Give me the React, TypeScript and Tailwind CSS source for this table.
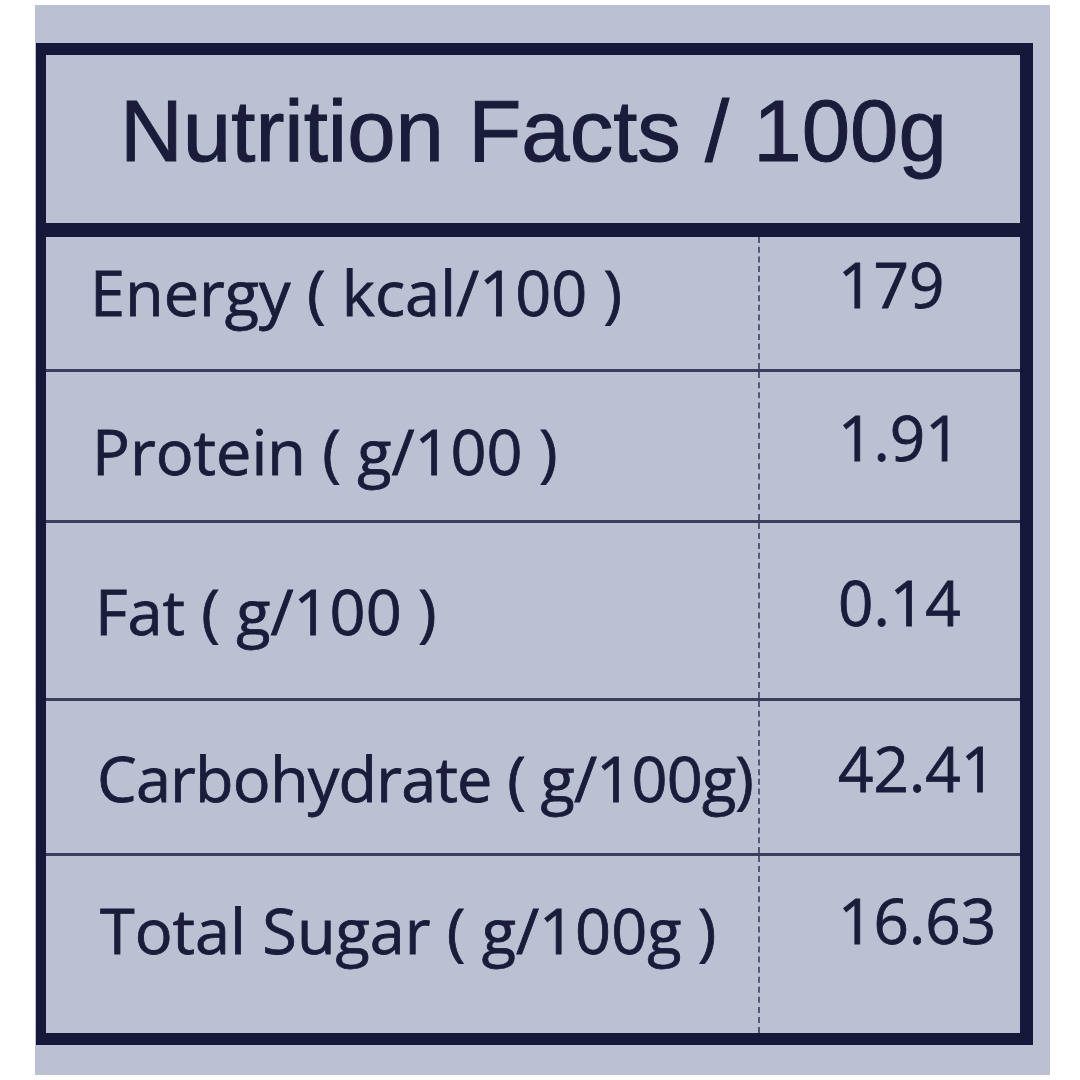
import React from "react";

type Row = {
  label: string;
  value: string;
  height: string;
  labelPad: string;
  valuePad: string;
  last?: boolean;
};

const rows: Row[] = [
  { label: "Energy ( kcal/100 )", value: "179", height: "h-[135px]", labelPad: "pl-[44px] pb-[24px]", valuePad: "pb-[38px]" },
  { label: "Protein ( g/100 )", value: "1.91", height: "h-[151px]", labelPad: "pl-[46px] pt-[8px]", valuePad: "pb-[18px]" },
  { label: "Fat ( g/100 )", value: "0.14", height: "h-[178px]", labelPad: "pl-[49px]", valuePad: "pb-[18px]" },
  { label: "Carbohydrate ( g/100g)", value: "42.41", height: "h-[155px]", labelPad: "pl-[51px] tracking-[-0.8px]", valuePad: "pb-[18px]" },
  { label: "Total Sugar ( g/100g )", value: "16.63", height: "h-[177px]", labelPad: "pl-[54px] pb-[30px]", valuePad: "pb-[50px]", last: true },
];

const App: React.FC = () => {
  return (
    <div className="min-h-[1080px] bg-white">
      <div className="ml-[35px] pt-[38px] w-[1015px] h-[1070px] mt-[5px] bg-[#bcc0d3]">
        <div className="ml-[1px] w-[997px] border-[#16183a] border-l-[10px] border-r-[13px] border-t-[12px] border-b-[12px] text-[#1a1c3a]">
          {/* Header */}
          <div className="h-[182px] border-b-[14px] border-[#16183a] flex items-center pl-[74px] pb-[18px]">
            <span className="font-['Liberation_Sans',Arial,sans-serif] text-[87px] leading-none [-webkit-text-stroke:1px_#1a1c3a]">
              Nutrition Facts / 100g
            </span>
          </div>

          {/* Rows */}
          {rows.map((row) => (
            <div
              key={row.label}
              className={`flex ${row.height} ${row.last ? "" : "border-b-[3px] border-[#3a3d5c]"}`}
            >
              <div
                className={`w-[714px] shrink-0 border-r-2 border-dashed border-[#555874] flex items-center ${row.labelPad}`}
              >
                <span className="font-['Open_Sans',sans-serif] text-[63px] leading-none whitespace-nowrap [-webkit-text-stroke:0.8px_#1a1c3a]">
                  {row.label}
                </span>
              </div>
              <div className={`flex-1 flex items-center pl-[78px] ${row.valuePad}`}>
                <span className="font-['Open_Sans',sans-serif] text-[62px] leading-none [-webkit-text-stroke:0.8px_#1a1c3a]">
                  {row.value}
                </span>
              </div>
            </div>
          ))}
        </div>
      </div>
    </div>
  );
};

export default App;
